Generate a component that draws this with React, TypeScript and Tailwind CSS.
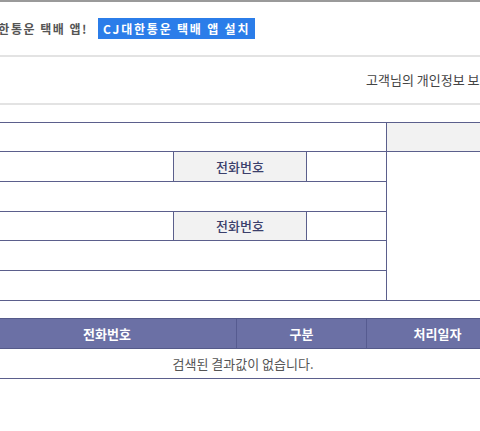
export default function App() {
  const line = "bg-[#5b5f8c]"
  const cell = "bg-white"
  const label =
    "bg-[#f2f2f2] flex items-center justify-center text-[13px] font-medium text-[#3b3f6b]"

  return (
    <div
      className="w-[480px] h-[431px] overflow-hidden bg-white"
      style={{ fontFamily: '"Noto Sans CJK KR", "Noto Sans", sans-serif' }}
    >
      {/* top bar */}
      <div className="h-[2px] bg-[#9a9a9a]" />
      <div className="h-[53px] flex items-center gap-[10px]">
        <div className="w-[88px] flex justify-end shrink-0">
          <span className="whitespace-nowrap text-[12px] font-semibold tracking-[1.5px] text-[#555]">
            CJ대한통운 택배 앱!
          </span>
        </div>
        <button className="h-[21px] px-[5px] bg-[#2b7de9] text-white text-[12px] font-bold tracking-[1.8px] whitespace-nowrap leading-none">
          CJ대한통운 택배 앱 설치
        </button>
      </div>
      <div className="h-[2px] bg-[#e3e3e3]" />

      {/* notice */}
      <div className="h-[46px] flex items-center pl-[366px]">
        <span className="whitespace-nowrap text-[13px] text-[#444]">
          고객님의 개인정보 보호를 위해 일부 정보는 마스킹 처리됩니다.
        </span>
      </div>
      <div className="h-[2px] bg-[#e3e3e3]" />

      {/* info table */}
      <div className="mt-[17px] ml-[-121px] w-[660px]">
        <div
          className={`${line} p-px grid gap-px grid-cols-[293px_132px_79px_152px] grid-rows-[28px_29px_29px_28px_29px_29px]`}
        >
          <div className={`${cell} col-span-3`} />
          <div className="bg-[#f2f2f2]" />
          <div className={cell} />
          <div className={label}>전화번호</div>
          <div className={cell} />
          <div className={`${cell} row-span-5`} />
          <div className={`${cell} col-span-3`} />
          <div className={cell} />
          <div className={label}>전화번호</div>
          <div className={cell} />
          <div className={`${cell} col-span-3`} />
          <div className={`${cell} col-span-3`} />
        </div>
      </div>

      {/* result table */}
      <div className="mt-[17px] ml-[-120px] w-[726px]">
        <div className="flex h-[31px] bg-[#6b70a5] border-y border-[#555a8a] text-white text-[13px] font-bold">
          <div className="w-[98px]" />
          <div className="w-[258px] flex items-center justify-center">전화번호</div>
          <div className="w-[130px] border-l border-[#565b90] flex items-center justify-center">
            구분
          </div>
          <div className="w-[142px] border-l border-[#565b90] flex items-center justify-center">
            처리일자
          </div>
          <div className="flex-1 border-l border-[#565b90]" />
        </div>
        <div className="h-[30px] flex items-center justify-center border-b border-[#5b5f8c] text-[13px] text-[#555]">
          검색된 결과값이 없습니다.
        </div>
      </div>
    </div>
  )
}
